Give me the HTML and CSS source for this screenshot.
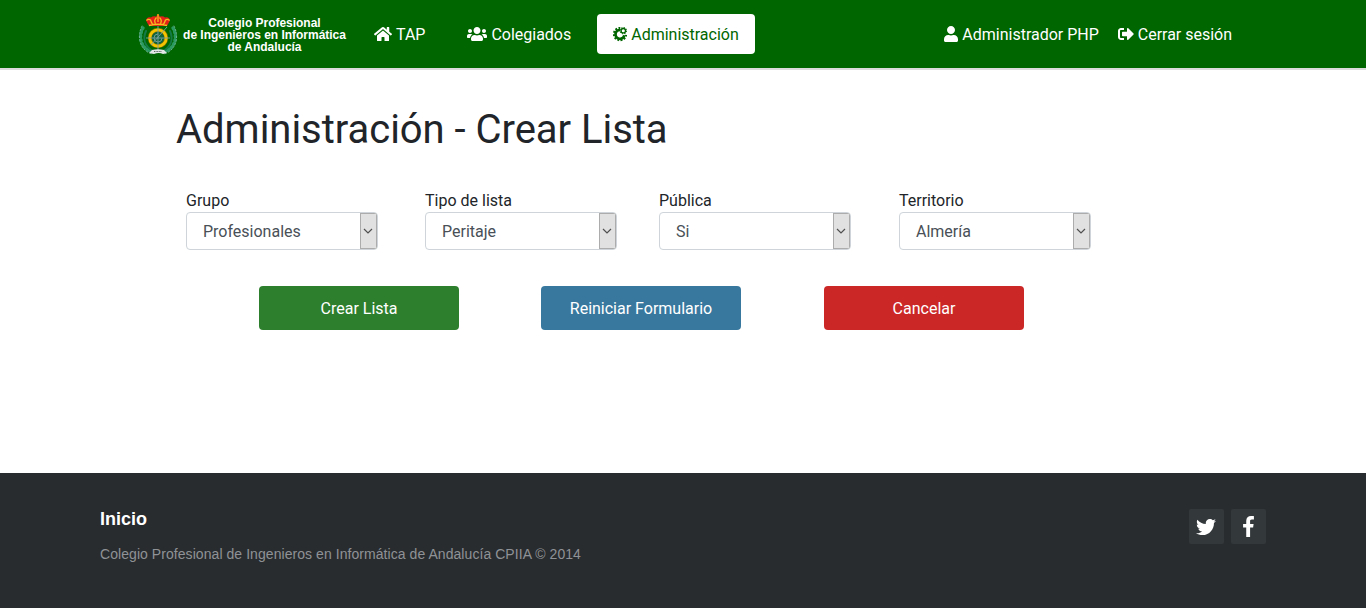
FILE: index.html
```html
<!DOCTYPE html>
<html lang="es">
<head>
<meta charset="utf-8">
<title>Administración - Crear Lista</title>
<link rel="stylesheet" href="styles.css">
</head>
<body>
<header class="navbar">
  <a class="brand">
    <svg class="crest" viewBox="0 0 42 42" width="42" height="42">
      <g fill="none" stroke="#2a9a60" stroke-linecap="round">
        <path stroke-width="3.4" stroke-dasharray="1.2 2.8" d="M6 14C0 25 6 36 16 38M36 14C42 25 36 36 26 38"/>
        <path stroke="#7fb5a2" stroke-width=".8" stroke-dasharray="1.500 2" d="M5 12C-1 24 4 37 15 40M37 12C43 24 38 37 27 40"/>
        <path stroke="#147a48" stroke-width="2" d="M9 17C5 26 9 33 16 37M33 17C37 26 33 33 26 37"/>
      </g>
      <circle cx="21" cy="24" r="8.200" fill="#12643a" stroke="#8a7000" stroke-width="4"/>
      <circle cx="21" cy="24" r="8.200" fill="none" stroke="#f4c400" stroke-width="2.800"/>
      <path d="M9 24h24M21 11v25M14 31l16-18" stroke="#78a0a0" stroke-width=".9" fill="none"/>
      <path d="M21 20a4 4 0 1 0 4 4" fill="none" stroke="#6d9898" stroke-width="1"/>
      <path d="M12 12L9 6.500q1-4 5-3 2-2 5-1l2-2.500 2 2.500q3-1 5 1 4-1 5 3L30 12z" fill="#e32118"/>
      <path d="M12 11.500q9-2.500 18 0M9.500 6.500q2-2 4-.5 1 3 2 4M19.500 3.500q-3 3-1 6M22.500 3.500q3 3 1 6M32.500 6.500q-2-2-4-.5-1 3-2 4M21 0v8" fill="none" stroke="#f5bd20" stroke-width="1.300"/>
      <path d="M15 36q6-1.500 12 0l3 3-4 1q-4-2-9 0l-5-1z" fill="#e3e7e6"/>
      <path d="M17 37.500h8" stroke="#59645f" stroke-width="1" stroke-dasharray="1 .6"/>
    </svg>
    <span class="brand-text">Colegio Profesional<br>de Ingenieros en Informática<br>de Andalucía</span>
  </a>
  <nav class="menu">
    <a class="link"><svg class="icon" width="18" height="16" viewBox="0 0 576 512"><path d="M280.370 148.260L96 300.110V464a16 16 0 0 0 16 16l112.060-.29a16 16 0 0 0 15.920-16V368a16 16 0 0 1 16-16h64a16 16 0 0 1 16 16v95.640a16 16 0 0 0 16 16.050L464 480a16 16 0 0 0 16-16V300L295.670 148.260a12.190 12.190 0 0 0-15.300 0zM571.600 251.470L488 182.560V44.050a12 12 0 0 0-12-12h-56a12 12 0 0 0-12 12v72.610L318.470 43a48 48 0 0 0-61 0L4.340 251.470a12 12 0 0 0-1.600 16.900l25.500 31A12 12 0 0 0 45.150 301l235.220-193.740a12.190 12.190 0 0 1 15.300 0L530.900 301a12 12 0 0 0 16.900-1.600l25.500-31a12 12 0 0 0-1.700-16.930z"/></svg><span>TAP</span></a>
    <a class="link"><svg class="icon" width="20" height="16" viewBox="0 0 640 512"><path d="M96 224c35.300 0 64-28.700 64-64s-28.700-64-64-64-64 28.700-64 64 28.700 64 64 64zm448 0c35.300 0 64-28.700 64-64s-28.700-64-64-64-64 28.700-64 64 28.700 64 64 64zm32 32h-64c-17.600 0-33.500 7.100-45.100 18.600 40.300 22.100 68.900 62 75.100 109.400h66c17.700 0 32-14.300 32-32v-32c0-35.300-28.700-64-64-64zm-256 0c61.900 0 112-50.100 112-112S381.900 32 320 32 208 82.100 208 144s50.100 112 112 112zm76.800 32h-8.300c-20.800 10-43.900 16-68.500 16s-47.600-6-68.500-16h-8.300C179.600 288 128 339.600 128 403.200V432c0 26.500 21.500 48 48 48h288c26.500 0 48-21.500 48-48v-28.800c0-63.600-51.600-115.200-115.200-115.200zm-223.700-13.400C161.500 263.100 145.600 256 128 256H64c-35.300 0-64 28.700-64 64v32c0 17.700 14.300 32 32 32h65.900c6.300-47.400 34.900-87.300 75.200-109.400z"/></svg><span>Colegiados</span></a>
    <a class="link active"><svg class="icon" width="14" height="16" viewBox="0 0 14 16"><g fill="none" stroke="currentColor"><path stroke-width="2.700" d="M7 3.800A4.500 4.500 0 1 0 11.400 9.300"/><path stroke-width="2" stroke-dasharray="1.800 1.500" d="M7.300 1.900A6.200 6.200 0 1 0 13.200 9"/><circle cx="10.300" cy="4.700" r="2.200" stroke-width="1.300"/><circle cx="10.300" cy="4.700" r="3.100" stroke-width="1.100" stroke-dasharray="1.300 1.130"/></g></svg><span>Administración</span></a>
  </nav>
  <nav class="session">
    <a class="link"><svg class="icon" width="14" height="16" viewBox="0 0 448 512"><path d="M224 256c70.700 0 128-57.300 128-128S294.700 0 224 0 96 57.300 96 128s57.300 128 128 128zm89.600 32h-16.700c-22.200 10.200-46.900 16-72.900 16s-50.600-5.800-72.900-16h-16.700C60.200 288 0 348.200 0 422.400V464c0 26.500 21.500 48 48 48h352c26.500 0 48-21.500 48-48v-41.600c0-74.200-60.200-134.400-134.400-134.400z"/></svg><span>Administrador PHP</span></a>
    <a class="link"><svg class="icon" width="16" height="16" viewBox="0 0 512 512"><path d="M497 273L329 441c-15 15-41 4.500-41-17v-96H152c-13.300 0-24-10.700-24-24v-96c0-13.300 10.700-24 24-24h136V88c0-21.400 25.900-32 41-17l168 168c9.300 9.400 9.300 24.600 0 34zM192 436v-40c0-6.600-5.400-12-12-12H96c-17.700 0-32-14.300-32-32V160c0-17.700 14.300-32 32-32h84c6.600 0 12-5.400 12-12V76c0-6.600-5.400-12-12-12H96c-53 0-96 43-96 96v192c0 53 43 96 96 96h84c6.600 0 12-5.400 12-12z"/></svg><span>Cerrar sesión</span></a>
  </nav>
</header>
<main class="content">
  <h1 class="title">Administración - Crear Lista</h1>
  <form>
    <div class="fields">
      <div class="field"><span class="label">Grupo</span><div class="select"><span class="value">Profesionales</span><span class="arrow"><svg width="10" height="8" viewBox="0 0 10 8"><path d="M1 2l4 4 4-4"/></svg></span></div></div>
      <div class="field"><span class="label">Tipo de lista</span><div class="select"><span class="value">Peritaje</span><span class="arrow"><svg width="10" height="8" viewBox="0 0 10 8"><path d="M1 2l4 4 4-4"/></svg></span></div></div>
      <div class="field"><span class="label">Pública</span><div class="select"><span class="value">Si</span><span class="arrow"><svg width="10" height="8" viewBox="0 0 10 8"><path d="M1 2l4 4 4-4"/></svg></span></div></div>
      <div class="field"><span class="label">Territorio</span><div class="select"><span class="value">Almería</span><span class="arrow"><svg width="10" height="8" viewBox="0 0 10 8"><path d="M1 2l4 4 4-4"/></svg></span></div></div>
    </div>
    <div class="actions">
      <button type="button" class="btn create">Crear Lista</button>
      <button type="button" class="btn reset">Reiniciar Formulario</button>
      <button type="button" class="btn cancel">Cancelar</button>
    </div>
  </form>
</main>
<footer class="footer">
  <div>
    <div class="foot-title">Inicio</div>
    <div class="foot-copy">Colegio Profesional de Ingenieros en Informática de Andalucía CPIIA © 2014</div>
  </div>
  <div class="social">
    <a class="tile twitter"><svg width="20" height="20" viewBox="0 0 512 512"><path d="M459.370 151.716c.325 4.548.325 9.097.325 13.645 0 138.720-105.583 298.558-298.558 298.558-59.452 0-114.680-17.219-161.137-47.106 8.447.974 16.568 1.299 25.340 1.299 49.055 0 94.213-16.568 130.274-44.832-46.132-.975-84.792-31.188-98.112-72.772 6.498.974 12.995 1.624 19.818 1.624 9.421 0 18.843-1.300 27.614-3.573-48.081-9.747-84.143-51.980-84.143-102.985v-1.299c13.969 7.797 30.214 12.670 47.431 13.319-28.264-18.843-46.781-51.005-46.781-87.391 0-19.492 5.197-37.360 14.294-52.954 51.655 63.675 129.300 105.258 216.365 109.807-1.624-7.797-2.599-15.918-2.599-24.040 0-57.828 46.782-104.934 104.934-104.934 30.213 0 57.502 12.670 76.670 33.137 23.715-4.548 46.456-13.320 66.599-25.340-7.798 24.366-24.366 44.833-46.132 57.827 21.117-2.273 41.584-8.122 60.426-16.243-14.292 20.791-32.161 39.308-52.628 54.253z"/></svg></a>
    <a class="tile"><svg width="11" height="21" viewBox="0 0 264 512"><path d="M76.700 512V283H0v-91h76.700v-71.700C76.700 42.400 124.300 0 193.800 0c33.300 0 61.900 2.500 70.200 3.600V85h-48.200c-37.800 0-45.100 18-45.100 44.300V192H256l-11.700 91h-73.600v229"/></svg></a>
  </div>
</footer>
</body>
</html>
```
FILE: styles.css
```css
* { box-sizing: border-box; }
body {
  margin: 0;
  height: 608px;
  display: flex;
  flex-direction: column;
  background: #fff;
  color: #212529;
  font: 16px/24px Roboto, sans-serif;
}
svg { display: block; flex: none; fill: currentColor; }
.navbar {
  height: 70px;
  padding: 0 118px 0 137px;
  display: flex;
  align-items: center;
  background: #006600;
  border-bottom: 2px solid #dcdcdc;
  color: #fff;
}
.brand { display: flex; align-items: center; gap: 4px; width: 221px; padding-top: 2px; }
.brand-text {
  width: 163px;
  white-space: nowrap;
  text-align: center;
  font: bold 12px/12px "Liberation Sans", Arial, sans-serif;
  letter-spacing: -0.02px;
}
.menu { display: flex; gap: 10px; }
.link { display: flex; align-items: center; gap: 4px; height: 40px; padding: 0 16px; border-radius: 4px; white-space: nowrap; }
.link span { padding-top: 2px; letter-spacing: -0.01px; }
.active { background: #fff; color: #006600; }
.session { display: flex; margin-left: auto; gap: 3px; }
.session .link { padding: 0 16px 0 0; }
.content { flex: 1; padding: 36px 176px 0; }
.title { margin: 0; font-size: 40px; line-height: 48px; font-weight: 400; letter-spacing: -0.03px; }
.fields { display: grid; grid-template-columns: 239px 234px 240px 192px; padding: 35px 0 0 10px; }
.field { width: 192px; }
.label { display: block; height: 23px; }
.select {
  display: flex;
  height: 38px;
  border: 1px solid #ced4da;
  border-radius: 4px;
  overflow: hidden;
  color: #495057;
}
.value { flex: 1; padding-left: 16px; line-height: 37px; }
.arrow { width: 17px; display: flex; align-items: center; justify-content: center; padding-right: 1px; background: #e1e1e1; border: 1px solid #acacac; }
.arrow svg { fill: none; stroke: #505050; stroke-width: 1.2; }
.actions { display: flex; gap: 82px; padding: 36px 0 0 83px; }
.btn { width: 200px; height: 44px; padding: 2px 0 0; border: 0; border-radius: 4px; color: #fff; font: 16px/24px Roboto, sans-serif; }
.create { background: #2d7f2d; }
.reset { background: #38789e; }
.cancel { background: #cb2727; margin-left: 1px; }
.footer {
  height: 135px;
  padding: 36px 100px 0;
  display: flex;
  justify-content: space-between;
  background: #292c2f;
  color: #fff;
  font-family: "Liberation Sans", Arial, sans-serif;
}
.foot-title { font-size: 18px; line-height: 20px; font-weight: 700; }
.foot-copy { margin-top: 16px; font-size: 14px; line-height: 18px; color: #8f9296; letter-spacing: 0.06px; }
.social { display: flex; gap: 7px; }
.tile { width: 35px; height: 35px; display: flex; align-items: center; justify-content: center; background: #33383b; border-radius: 2px; }
.twitter { padding-right: 2px; }
```
